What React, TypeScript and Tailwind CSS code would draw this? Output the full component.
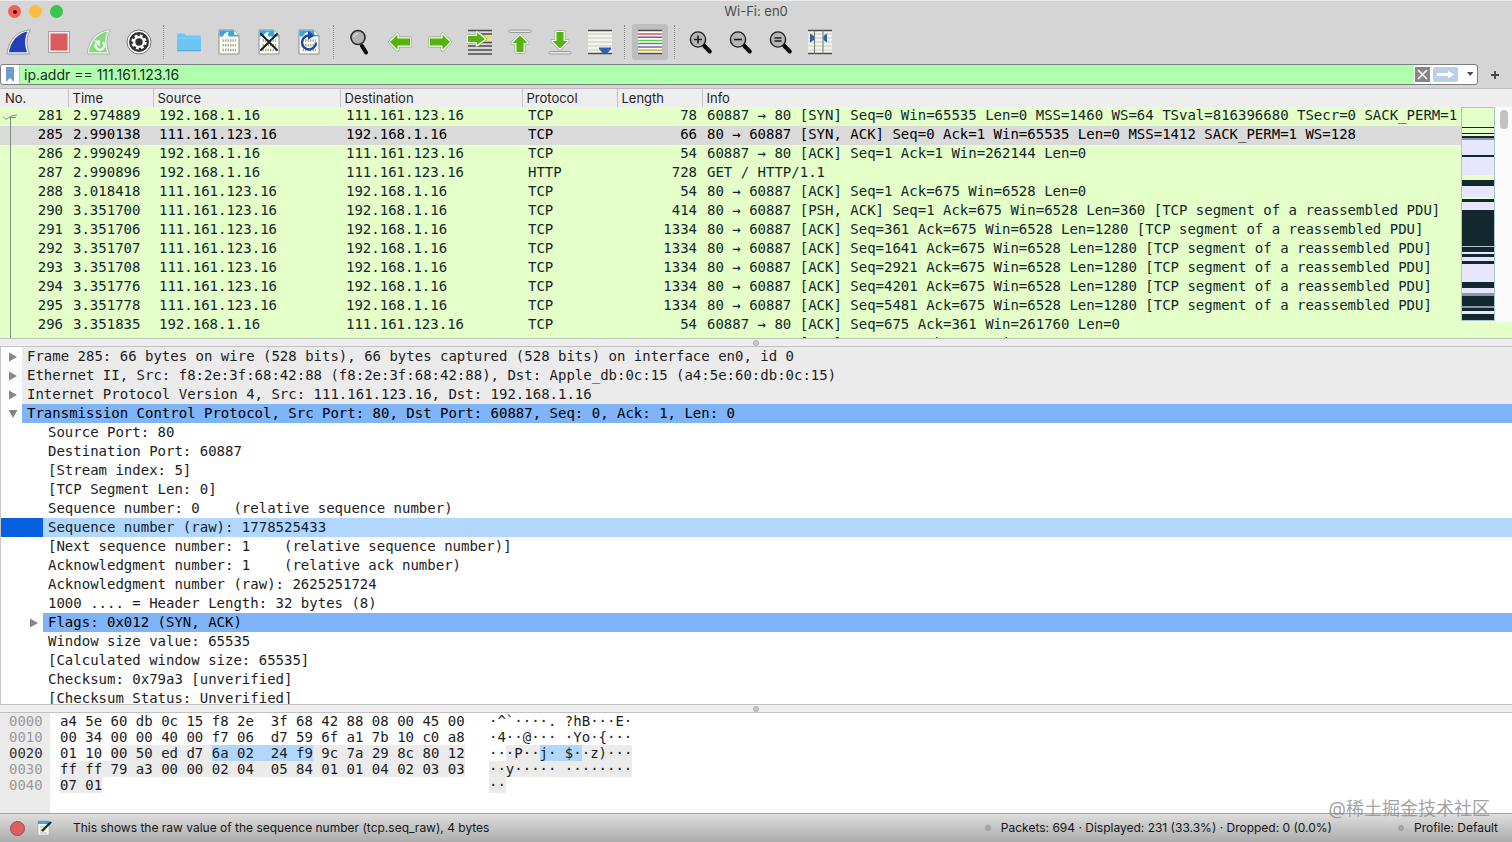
import type { ReactNode } from "react";

type Packet = [no: string, time: string, src: string, dst: string, proto: string, len: string, info: string];

const A = "192.168.1.16";
const B = "111.161.123.16";
const packets: Packet[] = [
  ["281", "2.974889", A, B, "TCP", "78", "60887 → 80 [SYN] Seq=0 Win=65535 Len=0 MSS=1460 WS=64 TSval=816396680 TSecr=0 SACK_PERM=1"],
  ["285", "2.990138", B, A, "TCP", "66", "80 → 60887 [SYN, ACK] Seq=0 Ack=1 Win=65535 Len=0 MSS=1412 SACK_PERM=1 WS=128"],
  ["286", "2.990249", A, B, "TCP", "54", "60887 → 80 [ACK] Seq=1 Ack=1 Win=262144 Len=0"],
  ["287", "2.990896", A, B, "HTTP", "728", "GET / HTTP/1.1"],
  ["288", "3.018418", B, A, "TCP", "54", "80 → 60887 [ACK] Seq=1 Ack=675 Win=6528 Len=0"],
  ["290", "3.351700", B, A, "TCP", "414", "80 → 60887 [PSH, ACK] Seq=1 Ack=675 Win=6528 Len=360 [TCP segment of a reassembled PDU]"],
  ["291", "3.351706", B, A, "TCP", "1334", "80 → 60887 [ACK] Seq=361 Ack=675 Win=6528 Len=1280 [TCP segment of a reassembled PDU]"],
  ["292", "3.351707", B, A, "TCP", "1334", "80 → 60887 [ACK] Seq=1641 Ack=675 Win=6528 Len=1280 [TCP segment of a reassembled PDU]"],
  ["293", "3.351708", B, A, "TCP", "1334", "80 → 60887 [ACK] Seq=2921 Ack=675 Win=6528 Len=1280 [TCP segment of a reassembled PDU]"],
  ["294", "3.351776", B, A, "TCP", "1334", "80 → 60887 [ACK] Seq=4201 Ack=675 Win=6528 Len=1280 [TCP segment of a reassembled PDU]"],
  ["295", "3.351778", B, A, "TCP", "1334", "80 → 60887 [ACK] Seq=5481 Ack=675 Win=6528 Len=1280 [TCP segment of a reassembled PDU]"],
  ["296", "3.351835", A, B, "TCP", "54", "60887 → 80 [ACK] Seq=675 Ack=361 Win=261760 Len=0"],
  ["297", "3.351835", A, B, "TCP", "54", "60887 → 80 [ACK] Seq=675 Ack=2921 Win=259200 Len=0"],
];

type Node = { text: string; kind?: "top" | "open" | "sub" | "picked" };
const tree: Node[] = [
  { text: "Frame 285: 66 bytes on wire (528 bits), 66 bytes captured (528 bits) on interface en0, id 0", kind: "top" },
  { text: "Ethernet II, Src: f8:2e:3f:68:42:88 (f8:2e:3f:68:42:88), Dst: Apple_db:0c:15 (a4:5e:60:db:0c:15)", kind: "top" },
  { text: "Internet Protocol Version 4, Src: 111.161.123.16, Dst: 192.168.1.16", kind: "top" },
  { text: "Transmission Control Protocol, Src Port: 80, Dst Port: 60887, Seq: 0, Ack: 1, Len: 0", kind: "open" },
  { text: "Source Port: 80" },
  { text: "Destination Port: 60887" },
  { text: "[Stream index: 5]" },
  { text: "[TCP Segment Len: 0]" },
  { text: "Sequence number: 0    (relative sequence number)" },
  { text: "Sequence number (raw): 1778525433", kind: "picked" },
  { text: "[Next sequence number: 1    (relative sequence number)]" },
  { text: "Acknowledgment number: 1    (relative ack number)" },
  { text: "Acknowledgment number (raw): 2625251724" },
  { text: "1000 .... = Header Length: 32 bytes (8)" },
  { text: "Flags: 0x012 (SYN, ACK)", kind: "sub" },
  { text: "Window size value: 65535" },
  { text: "[Calculated window size: 65535]" },
  { text: "Checksum: 0x79a3 [unverified]" },
  { text: "[Checksum Status: Unverified]" },
];

const stripes: [number, number, string][] = [
  [0, 57, "#e4ffc7"], [57, 61, "#12272e"], [61, 75, "#e4ffc7"], [75, 79, "#12272e"], [79, 84, "#e4ffc7"],
  [84, 91, "#12272e"], [91, 97, "#8b98ad"], [97, 142, "#e7e6ff"], [142, 148, "#12272e"], [148, 203, "#e7e6ff"],
  [203, 217, "#e4ffc7"], [217, 235, "#12272e"], [235, 270, "#e7e6ff"], [270, 276, "#e4ffc7"], [276, 283, "#12272e"],
  [283, 307, "#e7e6ff"], [307, 417, "#12272e"], [417, 421, "#b9c4cf"], [421, 436, "#12272e"], [436, 441, "#e7e6ff"],
  [441, 451, "#12272e"], [451, 462, "#e7e6ff"], [462, 472, "#12272e"], [472, 526, "#e7e6ff"], [526, 542, "#12272e"],
  [542, 559, "#e7e6ff"], [559, 568, "#8b98a5"], [568, 598, "#12272e"], [598, 604, "#8b98a5"], [604, 614, "#12272e"],
  [614, 621, "#e7e6ff"], [621, 640, "#12272e"],
];

const mono = "font-['DejaVu_Sans_Mono','Liberation_Mono',monospace] text-[14px]";

function Tool({ label, active, children }: { label: string; active?: boolean; children: ReactNode }) {
  return (
    <button
      type="button"
      aria-label={label}
      className={`flex h-9 w-9 items-center justify-center rounded-[3px] ${active ? "bg-[#bebebe]" : ""}`}
    >
      <svg viewBox="0 0 26 26" className="h-[26px] w-[26px]" fill="none">
        {children}
      </svg>
    </button>
  );
}

function Divider() {
  return <span className="h-[34px] border-l border-dotted border-[#8a8a8a]" />;
}

const fin = "M2 24C4 11 12 3 23 1.500C19 8 19 16 22 24Z";

function Sheet() {
  return (
    <>
      <path d="M3 1H18L23 6V25H3Z" fill="#fdfdf6" stroke="#8f8f8c" />
      <path d="M3.500 1.500H18V6H22.500V7.500H3.500Z" fill="#35a7de" />
      <path d="M7 8C7.500 5 9.500 3.200 13 2.800C11.800 4.500 11.800 6 12.500 8Z" fill="#fff" />
      <path d="M18 1V6H23Z" fill="#f4f6f8" stroke="#9aa" strokeWidth=".6" />
      <g stroke="#a9a993" strokeWidth="2.600" strokeDasharray="1.400 1.100">
        <path d="M6.500 11.500H20M6.500 16.200H20M6.500 21H20" />
      </g>
    </>
  );
}

function Green({ d }: { d: string }) {
  return (
    <g strokeLinejoin="round">
      <path d={d} stroke="#8fa386" strokeWidth="3.800" />
      <path d={d} stroke="#f3ffea" strokeWidth="2.600" />
      <path d={d} fill="#56b20e" />
    </g>
  );
}

function Lens({ sign }: { sign: string }) {
  return (
    <>
      <path d="M17 16.500L22.800 22.500" stroke="#0c0c0c" strokeWidth="4" strokeLinecap="round" />
      <circle cx="11" cy="10.500" r="7.600" fill="#b5b5b5" stroke="#1c1c1c" strokeWidth="1.400" />
      <path d={sign} stroke="#1c1c1c" strokeWidth="1.600" />
    </>
  );
}

function Toolbar() {
  return (
    <div className="flex h-[40px] items-center pl-[1px]">
      <div className="flex w-[162px] gap-1">
        <Tool label="Start capture">
          <path d={fin} fill="#2340b4" stroke="#f4f4f4" strokeWidth="1.500" />
          <path d="M1 25C3 10 11 2 24.500 .7C20 8 20 16 23.500 25Z" stroke="#8d8d8d" strokeWidth=".8" />
        </Tool>
        <Tool label="Stop capture">
          <rect x="2.500" y="2.500" width="21" height="21" fill="#f3efef" stroke="#a2a2a2" />
          <rect x="4.500" y="4.500" width="17" height="17" fill="#db5a5c" />
        </Tool>
        <Tool label="Restart capture">
          <path d={fin} fill="#82dc7b" stroke="#f1f7ef" strokeWidth="1.500" />
          <path d="M1 25C3 10 11 2 24.500 .7C20 8 20 16 23.500 25Z" stroke="#a5aaa3" strokeWidth=".8" />
          <path d="M10 14.500A4.300 4.300 0 1 0 17 13.500" stroke="#fff" strokeWidth="2.200" />
          <path d="M8 11.500H14V17.500Z" fill="#fff" />
        </Tool>
        <Tool label="Capture options">
          <circle cx="13" cy="13" r="12" fill="#fafafa" stroke="#767676" />
          <circle cx="13" cy="13" r="10" fill="#2e3033" />
          <circle cx="13" cy="13" r="6" stroke="#fff" strokeWidth="3.400" strokeDasharray="2.600 2.110" />
          <circle cx="13" cy="13" r="4.800" stroke="#fff" strokeWidth="2.200" />
        </Tool>
      </div>
      <Divider />
      <div className="flex w-[169px] gap-1 pl-[7px]">
        <Tool label="Open file">
          <path d="M1 6Q1 4.500 2.500 4.500H8L10 6.500H23.500Q25 6.500 25 8V21Q25 22.500 23.500 22.500H2.500Q1 22.500 1 21Z" fill="#6cc5f5" />
          <path d="M1 9H25" stroke="#8ad4fb" />
          <path d="M1 21.500H25" stroke="#59abd8" />
        </Tool>
        <Tool label="Save file">
          <Sheet />
        </Tool>
        <Tool label="Close file">
          <Sheet />
          <path d="M5 5L21 21M21 5L5 21" stroke="#1b1f24" strokeWidth="2" strokeLinecap="round" />
        </Tool>
        <Tool label="Reload file">
          <Sheet />
          <path d="M13 6.500A7 7 0 1 0 20 13.500" stroke="#1d4a9c" strokeWidth="2.400" />
          <path d="M12 2L18.500 6.500L12 11Z" fill="#1d4a9c" />
        </Tool>
      </div>
      <Divider />
      <div className="flex w-[290px] gap-1 pl-[8px]">
        <Tool label="Find packet">
          <path d="M15 17L19 23.500" stroke="#0c0c0c" strokeWidth="4" strokeLinecap="round" />
          <circle cx="11" cy="8.500" r="7" fill="#b3b3b3" stroke="#2a2a2a" strokeWidth="1.600" />
          <path d="M7 8A4.500 4.500 0 0 1 11 4.500" stroke="#e9e9e9" />
        </Tool>
        <Tool label="Previous packet"><Green d="M3 13L10.500 5.500V9.500H23V16.500H10.500V20.500Z" /></Tool>
        <Tool label="Next packet"><Green d="M23 13L15.500 5.500V9.500H3V16.500H15.500V20.500Z" /></Tool>
        <Tool label="Go to packet">
          <path d="M1 1.500H25M1 13.500H25M1 17H25M1 21H25M1 25H25M14 5H25" stroke="#4b4b4b" strokeWidth="1.500" />
          <rect x="16" y="6.500" width="9" height="5" fill="#f7df58" />
          <Green d="M1 7H10V3.500L18 10L10 16V13H1Z" />
        </Tool>
        <Tool label="First packet">
          <rect x="2" y="1" width="22" height="2.500" rx="1.200" fill="#e8e8e8" stroke="#8a8a8a" strokeWidth=".8" />
          <Green d="M13 6.500L20.500 14H16.500V23H9.500V14H5.500Z" />
        </Tool>
        <Tool label="Last packet">
          <rect x="2" y="22.500" width="22" height="2.500" rx="1.200" fill="#e8e8e8" stroke="#8a8a8a" strokeWidth=".8" />
          <Green d="M13 19.500L20.500 12H16.500V3H9.500V12H5.500Z" />
        </Tool>
        <Tool label="Auto scroll">
          <rect x="1" y="1" width="24" height="24" fill="#f4f4ee" />
          <path d="M1 5H25M1 9H25M1 13H25M1 17H25M1 21H25" stroke="#c6c8c0" />
          <path d="M1 1.500H25M1 24.500H25" stroke="#4b4b4b" strokeWidth="1.600" />
          <path d="M12 18.500H24V20L20.500 24H15.500L12 20Z" fill="#3062b0" />
        </Tool>
      </div>
      <Divider />
      <div className="flex w-[49px] pl-[7px]">
        <Tool label="Colorize packets" active>
          <rect x="1" y="1" width="24" height="24" fill="#fff" />
          <path d="M1 1.500H25M1 24.500H25" stroke="#4b4b4b" strokeWidth="1.600" />
          <path d="M1 5H25" stroke="#e8414a" strokeWidth="1.400" />
          <path d="M1 8.200H25" stroke="#3b5fb4" strokeWidth="1.400" />
          <path d="M1 11.500H25" stroke="#6cc938" strokeWidth="1.400" />
          <path d="M1 14.500H25" stroke="#3d84c4" strokeWidth="1.400" />
          <path d="M1 18H25" stroke="#7a5793" strokeWidth="1.400" />
          <path d="M1 21.300H25" stroke="#cdb44a" strokeWidth="1.800" />
        </Tool>
      </div>
      <Divider />
      <div className="flex gap-1 pl-[7px]">
        <Tool label="Zoom in"><Lens sign="M7 10.500H15M11 6.500V14.500" /></Tool>
        <Tool label="Zoom out"><Lens sign="M7 10.500H15" /></Tool>
        <Tool label="Normal size"><Lens sign="M7.500 9H14.500M7.500 12H14.500" /></Tool>
        <Tool label="Resize columns">
          <rect x="1" y="1" width="24" height="24" fill="#f4f4ee" />
          <path d="M1 5H25M1 9H25M1 13H25M1 17H25M1 21H25" stroke="#c9cdc0" />
          <path d="M1 1.500H25M1 24.500H25" stroke="#4b4b4b" strokeWidth="1.400" />
          <path d="M7.500 1V25M16 1V25" stroke="#777" />
          <path d="M3 4.500L7 7V11L3 13.500ZM20 4.500L16.500 7V11L20 13.500Z" fill="#3062b0" />
        </Tool>
      </div>
    </div>
  );
}

function FilterBar() {
  return (
    <form className="flex h-6 items-center pb-[3px]">
      <div className="flex h-[21px] flex-1 items-center rounded-[3px] border border-[#7d7d7d] bg-white">
        <button type="button" aria-label="Bookmarks" className="flex h-full w-[19px] items-center justify-center border-r border-[#b9c6b9]">
          <svg viewBox="0 0 10 16" className="h-4 w-[10px]"><path d="M1 0H9V15L5 11L1 15Z" fill="#6d9ccf" /></svg>
        </button>
        <input
          aria-label="Display filter"
          defaultValue="ip.addr == 111.161.123.16"
          className="h-full min-w-0 flex-1 bg-[#afffaf] pl-1 text-[14px] text-[#17301a] outline-none"
        />
        <button type="button" aria-label="Clear filter" className="ml-px flex h-[15px] w-[15px] items-center justify-center bg-[#858585]">
          <svg viewBox="0 0 15 15" className="h-[15px] w-[15px]"><path d="M3 3L12 12M12 3L3 12" stroke="#fff" strokeWidth="1.600" /></svg>
        </button>
        <button type="button" aria-label="Apply filter" className="ml-[3px] flex h-[15px] w-[25px] items-center justify-center rounded-[2px] bg-[#b9d0e8]">
          <svg viewBox="0 0 25 15" className="h-[15px] w-[25px]"><path d="M4 6H15V3.500L21 7.500L15 11.500V9H4Z" fill="#fff" /></svg>
        </button>
        <button type="button" aria-label="Recent filters" className="flex h-full w-[19px] items-center justify-center">
          <svg viewBox="0 0 8 5" className="ml-1 h-[5px] w-2"><path d="M1 0H7.500L4.200 4Z" fill="#4a4a4a" /></svg>
        </button>
      </div>
      <button type="button" aria-label="Add filter button" className="flex w-[34px] items-center justify-center">
        <svg viewBox="0 0 10 10" className="h-[10px] w-[10px]"><path d="M5 1V9M1 5H9" stroke="#444" strokeWidth="1.800" /></svg>
      </button>
    </form>
  );
}

function Columns() {
  return (
    <colgroup>
      <col className="w-[68px]" />
      <col className="w-[85px]" />
      <col className="w-[187px]" />
      <col className="w-[182px]" />
      <col className="w-[95px]" />
      <col className="w-[85px]" />
      <col />
    </colgroup>
  );
}

function PacketList() {
  const heads = ["No.", "Time", "Source", "Destination", "Protocol", "Length", "Info"];
  return (
    <section className="relative h-[249px] shrink-0 overflow-hidden bg-[#e4ffc7]">
      <table className="w-full table-fixed border-collapse text-left">
        <Columns />
        <thead>
          <tr className="h-[18px] bg-[#eeeeee] text-[13px] leading-[18px] text-[#1e1e1e]">
            {heads.map((h, i) => (
              <th key={h} className={`p-0 font-normal ${i === 0 ? "pl-[5px]" : "border-l border-[#c4c4c4] pl-1"}`}>{h}</th>
            ))}
          </tr>
        </thead>
        <tbody className={`${mono} leading-[17px] text-[#12272e]`}>
          {packets.map((p) => (
            <tr key={p[0]} className={`h-[19px] align-top whitespace-nowrap ${p[0] === "285" ? "bg-[#dadada] text-black" : ""}`}>
              <td className="p-0 pr-[5px] text-right">{p[0]}</td>
              <td className="p-0 pl-[5px]">{p[1]}</td>
              <td className="p-0 pl-[6px]">{p[2]}</td>
              <td className="p-0 pl-[6px]">{p[3]}</td>
              <td className="p-0 pl-[6px]">{p[4]}</td>
              <td className="p-0 pr-[5px] text-right">{p[5]}</td>
              <td className="p-0 pl-[5px]">{p[6]}</td>
            </tr>
          ))}
        </tbody>
      </table>
      <svg viewBox="0 0 18 232" className="absolute top-[18px] left-0 h-[232px] w-[18px]" fill="none" stroke="#7f917c">
        <path d="M3 9.500L6 12.500L11 9L17 8M9 10.500H16M10.500 10V232" />
      </svg>
      <div className="absolute top-[18px] right-0 flex h-[215px]">
        <svg viewBox="0 0 34 640" preserveAspectRatio="none" className="h-[214px] w-[34px] border border-[#a9c7c9]">
          {stripes.map(([a, b, c]) => (
            <rect key={a} y={a} width="34" height={b - a} fill={c} shapeRendering="crispEdges" />
          ))}
        </svg>
        <div className="w-[17px] bg-[#fafafa] pt-[3px] pl-[5px]">
          <div className="h-[19px] w-2 rounded-full bg-[#c1c1c1]" />
        </div>
      </div>
    </section>
  );
}

function Splitter() {
  return (
    <div className="flex h-[9px] shrink-0 items-center justify-center border-y border-[#c2c2c2] bg-[#eeeeee]">
      <span className="h-[6px] w-[6px] rounded-full border border-[#adadad] bg-[#cccccc]" />
    </div>
  );
}

function Triangle({ down }: { down?: boolean }) {
  return (
    <svg viewBox="0 0 10 10" className="h-[10px] w-[10px]">
      <path d={down ? "M.5 1H9.500L5 9Z" : "M1 .5V9.500L9 5Z"} fill="#868686" />
    </svg>
  );
}

function Details() {
  return (
    <ul className={`${mono} flex min-h-0 flex-1 flex-col overflow-hidden border-l border-[#c8c8c8] bg-white leading-[19px] text-[#1c1c1c]`}>
      {tree.map(({ text, kind }) => {
        const root = kind === "top" || kind === "open";
        const tone =
          kind === "top" ? "bg-[#ebebeb]" : kind === "open" || kind === "sub" ? "bg-[#7fb4f9] text-black" : kind === "picked" ? "bg-[#b1d7ff] text-[#10222e]" : "";
        return (
          <li key={text} className="flex h-[19px] shrink-0">
            <span className={`flex shrink-0 items-center ${root ? "w-[21px] pl-[7px]" : "w-[42px] pl-7"} ${kind === "picked" ? "bg-[#0661e0]" : ""}`}>
              {(root || kind === "sub") && <Triangle down={kind === "open"} />}
            </span>
            <span className={`flex flex-1 items-center pl-[5px] whitespace-pre ${tone}`}>{text}</span>
          </li>
        );
      })}
    </ul>
  );
}

const shade = "bg-[#ebebeb]";
const pick = "bg-[#b1d7ff]";

function Dump() {
  return (
    <section className={`${mono} flex h-[101px] shrink-0 border-b border-[#a4a4a4] bg-white leading-[16px] whitespace-pre text-[#1c1c1c]`}>
      <div className="w-[50px] bg-[#ebebeb] pl-[9px] text-[#9a9a9a]">
        <div>0000</div>
        <div>0010</div>
        <div className="text-[#333333]">0020</div>
        <div>0030</div>
        <div>0040</div>
      </div>
      <div className="w-[439px] pl-[10px]">
        <div>a4 5e 60 db 0c 15 f8 2e  3f 68 42 88 08 00 45 00</div>
        <div>00 34 00 00 40 00 f7 06  d7 59 6f a1 7b 10 c0 a8</div>
        <div>01 10 <span className={shade}>00 50 ed d7 </span><span className={pick}>6a 02  24 f9</span><span className={shade}> 9c 7a 29 8c 80 12</span></div>
        <div><span className={shade}>ff ff 79 a3 00 00 02 04  05 84 01 01 04 02 03 03</span></div>
        <div><span className={shade}>07 01</span></div>
      </div>
      <div>
        <div>·^`····. ?hB···E·</div>
        <div>·4··@··· ·Yo·{"{"}···</div>
        <div>··<span className={shade}>·P··</span><span className={pick}>j· $·</span><span className={shade}>·z)···</span></div>
        <div><span className={shade}>··y····· ········</span></div>
        <div><span className={shade}>··</span></div>
      </div>
    </section>
  );
}

function Dot() {
  return <span className="h-[6px] w-[6px] rounded-full border border-[#9a9a9a] bg-[#a8a8a8]" />;
}

export default function App() {
  return (
    <main className="relative flex h-screen flex-col overflow-hidden bg-[#d5d5d5] font-['Inter','Noto_Sans_CJK_SC',sans-serif]">
      <header className="flex h-[22px] shrink-0 items-center border-t border-[#ececec]">
        <div className="flex flex-1 gap-2 pl-2">
          <button type="button" aria-label="Close" className="flex h-[13px] w-[13px] items-center justify-center rounded-full bg-[#f4605a]">
            <span className="h-1 w-1 rounded-full bg-[#5a0603]" />
          </button>
          <button type="button" aria-label="Minimize" className="h-[13px] w-[13px] rounded-full bg-[#fbbd3f]" />
          <button type="button" aria-label="Zoom" className="h-[13px] w-[13px] rounded-full bg-[#35c84a]" />
        </div>
        <h1 className="text-[13px] text-[#4c4c4c]">Wi-Fi: en0</h1>
        <div className="flex-1 pl-2" />
      </header>
      <div className="shrink-0 border-b border-[#bdbdbd]">
        <Toolbar />
        <div className="pt-[2px]">
          <FilterBar />
        </div>
      </div>
      <PacketList />
      <Splitter />
      <Details />
      <Splitter />
      <Dump />
      <footer className="flex h-7 shrink-0 items-center bg-linear-to-b from-[#dedede] to-[#acacac] pr-[14px] pl-[10px] text-[12px] text-[#161616]">
        <button type="button" aria-label="Expert information" className="h-[15px] w-[15px] rounded-full border border-[#8f5050] bg-[#e35d60]" />
        <button type="button" aria-label="Edit capture comment" className="ml-3">
          <svg viewBox="0 0 16 16" className="h-4 w-4" fill="none">
            <path d="M1 1H12V15H1Z" fill="#f7f7f2" stroke="#aaa" strokeWidth=".6" />
            <path d="M1 1H12V4H1Z" fill="#3ba6dc" />
            <path d="M3 7H10M3 10H8M3 13H10" stroke="#b8b8a8" />
            <path d="M5 11L14 2" stroke="#2a2a2a" strokeWidth="2.400" />
          </svg>
        </button>
        <p className="ml-5 flex-1">This shows the raw value of the sequence number (tcp.seq_raw), 4 bytes</p>
        <Dot />
        <p className="ml-[10px]">Packets: 694 · Displayed: 231 (33.3%) · Dropped: 0 (0.0%)</p>
        <span className="ml-[66px] flex"><Dot /></span>
        <p className="ml-[10px]">Profile: Default</p>
      </footer>
      <p className="absolute right-[22px] bottom-[21px] text-[18px] leading-6 text-[#8a8a8a]/80">@稀土掘金技术社区</p>
    </main>
  );
}
